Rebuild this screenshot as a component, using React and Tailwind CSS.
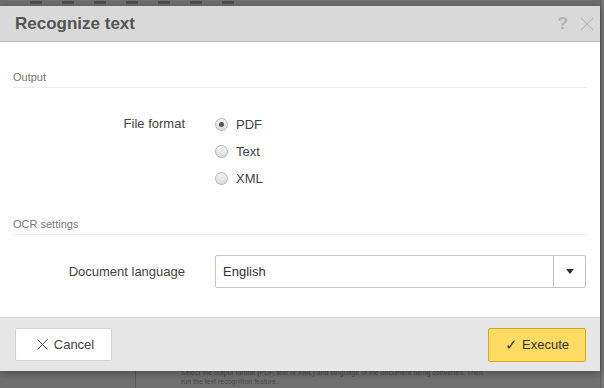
import { X } from 'lucide-react'

const font = { fontFamily: '"Liberation Sans", Arial, sans-serif' }

function Radio({ label, checked }) {
  return (
    <label className="flex items-center h-[27px] gap-[8px] text-[13px] text-[#444]">
      <span className="w-[13px] h-[13px] rounded-full border border-[#b4b4b4] bg-gradient-to-b from-[#f4f4f4] to-[#dcdcdc] flex items-center justify-center">
        {checked && <span className="w-[5px] h-[5px] rounded-full bg-[#555]" />}
      </span>
      {label}
    </label>
  )
}

function Section({ title, children }) {
  return (
    <div className="px-[13px]">
      <div className="text-[11px] leading-[16px] text-[#777] pb-[2px] border-b border-[#ececec]">{title}</div>
      {children}
    </div>
  )
}

export default function App() {
  return (
    <div className="relative w-[604px] h-[388px] overflow-hidden bg-[#6e6e6e]" style={font}>
      {/* page behind the overlay */}
      <div className="flex gap-[20px] pl-[30px] pt-[1px]">
        {[0, 1, 2, 3, 4, 5, 6].map(i => (
          <div key={i} className="w-[12px] h-[3px] bg-[#4e4e4e]" />
        ))}
      </div>
      <div className="absolute left-[135px] top-[368px] bottom-0 right-[4px] border-l border-[#5a5a5a] bg-[#707070] pl-[45px] text-[7px] leading-[9px] text-[#4a4a4a]">
        <div>Select the output format (PDF, text or XML) and language of the document being converted. Then</div>
        <div>run the text recognition feature.</div>
      </div>
      <div className="absolute top-0 bottom-0 right-0 w-[4px] border-l border-[#5c5c5c] bg-[#767676]" />

      {/* dialog */}
      <div className="absolute left-0 top-[6px] w-[600px] flex flex-col bg-white shadow-[0_2px_8px_rgba(0,0,0,0.3)]">
        <div className="h-[36px] flex items-center justify-between bg-[#d9d9d9] border-b border-[#b8b8b8] pl-[15px] pr-[2px]">
          <span className="text-[17px] font-bold text-[#555]">Recognize text</span>
          <div className="flex items-center gap-[8px] text-[#b4b4b4]">
            <span className="text-[17px] font-bold">?</span>
            <X size={22} strokeWidth={1.1} />
          </div>
        </div>

        <div className="pt-[27px] pb-[29px] flex flex-col">
          <Section title="Output">
            <div className="flex pt-[26px]">
              <div className="w-[172px] text-right text-[13px] text-[#444] leading-[20px]">File format</div>
              <div className="flex flex-col pl-[30px] -mt-[3px]">
                <Radio label="PDF" checked />
                <Radio label="Text" />
                <Radio label="XML" />
              </div>
            </div>
          </Section>

          <div className="h-[24px]" />

          <Section title="OCR settings">
            <div className="flex items-center pt-[20px]">
              <div className="w-[172px] text-right text-[13px] text-[#444]">Document language</div>
              <div className="ml-[30px] flex-1 mr-[1px] h-[33px] flex border border-[#c4c4c4] rounded-[2px]">
                <div className="flex-1 flex items-center pl-[7px] text-[13px] text-[#333]">English</div>
                <div className="w-[32px] border-l border-[#c4c4c4] flex items-center justify-center">
                  <span className="w-0 h-0 border-l-[4px] border-r-[4px] border-t-[5px] border-l-transparent border-r-transparent border-t-[#333]" />
                </div>
              </div>
            </div>
          </Section>
        </div>

        <div className="h-[54px] bg-[#e6e6e6] border-t border-[#d6d6d6] flex items-center justify-between pl-[15px] pr-[14px]">
          <button className="w-[97px] h-[33px] bg-white border border-[#d4d4d4] rounded-[2px] flex items-center justify-center gap-[2px] text-[13px] text-[#444]">
            <X size={19} strokeWidth={1.2} />
            Cancel
          </button>
          <button className="w-[98px] h-[34px] bg-[#ffdb63] border border-[#d5a91a] rounded-[2px] flex items-center justify-center gap-[4px] text-[13px] text-[#333]">
            <span className="text-[15px] leading-none">✓</span>
            Execute
          </button>
        </div>
      </div>
    </div>
  )
}
